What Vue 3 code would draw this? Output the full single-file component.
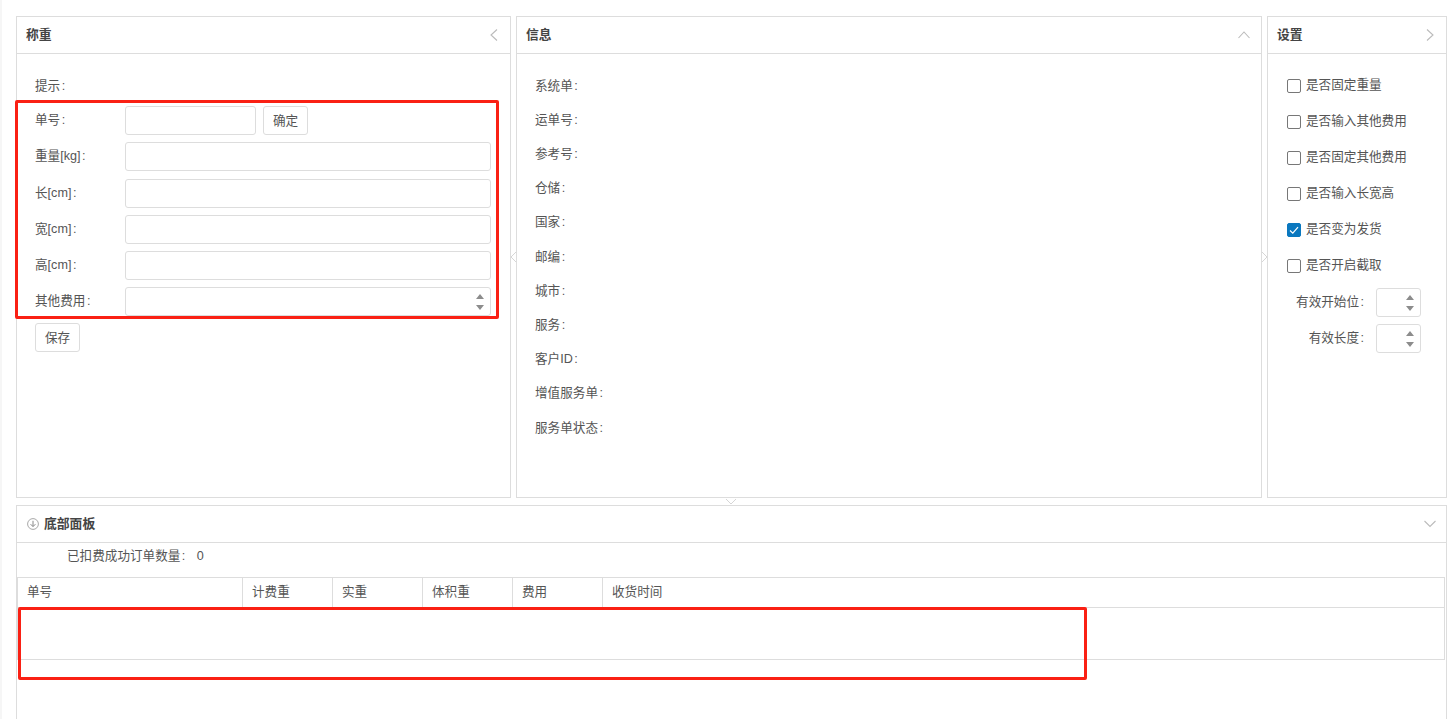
<script setup>
const infoRows = ['系统单', '运单号', '参考号', '仓储', '国家', '邮编', '城市', '服务', '客户ID', '增值服务单', '服务单状态']
const formRows = ['重量[kg]', '长[cm]', '宽[cm]', '高[cm]']
const checks = [
  { label: '是否固定重量', on: false },
  { label: '是否输入其他费用', on: false },
  { label: '是否固定其他费用', on: false },
  { label: '是否输入长宽高', on: false },
  { label: '是否变为发货', on: true },
  { label: '是否开启截取', on: false }
]
const numberRows = ['有效开始位', '有效长度']
const columns = [
  { label: '单号', wide: true },
  { label: '计费重' },
  { label: '实重' },
  { label: '体积重' },
  { label: '费用' },
  { label: '收货时间' }
]
</script>

<template>
  <div class="page">
    <div class="top">
      <section class="panel weigh">
        <header class="head">
          <h2>称重</h2>
          <svg class="chev" width="10" height="14" viewBox="0 0 10 14"><path d="M8 1.5 2 7l6 5.5" /></svg>
        </header>
        <div class="form">
          <div class="tip">提示<span class="c">:</span></div>
          <div class="row">
            <label>单号<span class="c">:</span></label>
            <input class="field short" type="text" />
            <button class="btn" type="button">确定</button>
          </div>
          <div v-for="r in formRows" :key="r" class="row">
            <label>{{ r }}<span class="c">:</span></label>
            <input class="field grow" type="text" />
          </div>
          <div class="row">
            <label>其他费用<span class="c">:</span></label>
            <div class="spin-wrap grow">
              <input class="field fill" type="text" />
              <svg class="spin" width="10" height="17" viewBox="0 0 10 17"><path d="M5 0 9 5H1zM1 11h8l-4 5z" /></svg>
            </div>
          </div>
          <button class="btn save" type="button">保存</button>
        </div>
      </section>

      <div class="split">
        <svg class="grip" width="7" height="12" viewBox="0 0 7 12"><path d="M6 1 1 6l5 5" /></svg>
      </div>

      <section class="panel info">
        <header class="head">
          <h2>信息</h2>
          <svg class="chev" width="14" height="10" viewBox="0 0 14 10"><path d="M1.5 8 7 2l5.5 6" /></svg>
        </header>
        <div class="info-list">
          <div v-for="r in infoRows" :key="r" class="info-row">{{ r }}<span class="c">:</span></div>
        </div>
      </section>

      <div class="split">
        <svg class="grip" width="7" height="12" viewBox="0 0 7 12"><path d="m1 1 5 5-5 5" /></svg>
      </div>

      <section class="panel settings">
        <header class="head">
          <h2>设置</h2>
          <svg class="chev" width="10" height="14" viewBox="0 0 10 14"><path d="m2 1.5 6 5.5-6 5.5" /></svg>
        </header>
        <div class="check-list">
          <div v-for="c in checks" :key="c.label" class="check-row">
            <span class="box" :class="{ on: c.on }">
              <svg v-if="c.on" width="12" height="12" viewBox="0 0 12 12"><path d="m2 6.5 2.8 2.7L10 3.2" /></svg>
            </span>
            <span class="check-text">{{ c.label }}</span>
          </div>
          <div class="num-list">
            <div v-for="n in numberRows" :key="n" class="num-row">
              <label>{{ n }}<span class="c">:</span></label>
              <div class="spin-wrap num">
                <input class="field fill" type="text" />
                <svg class="spin" width="10" height="17" viewBox="0 0 10 17"><path d="M5 0 9 5H1zM1 11h8l-4 5z" /></svg>
              </div>
            </div>
          </div>
        </div>
      </section>
    </div>

    <div class="hsplit">
      <svg class="grip" width="12" height="7" viewBox="0 0 12 7"><path d="m1 1 5 5 5-5" /></svg>
    </div>

    <section class="panel bottom">
      <header class="head">
        <h2 class="with-icon">
          <svg width="12" height="12" viewBox="0 0 12 12" class="circle"><circle cx="6" cy="6" r="5.4" /><path class="arrow" d="M6 2.8v5.6M3.6 6.2 6 8.6l2.4-2.4" /></svg>
          底部面板
        </h2>
        <svg class="chev" width="14" height="10" viewBox="0 0 14 10"><path d="M1.5 2 7 7.5 12.5 2" /></svg>
      </header>
      <div class="count"><span>已扣费成功订单数量<span class="c">:</span></span><span class="zero">0</span></div>
      <div class="table">
        <div class="thead">
          <div v-for="c in columns" :key="c.label" class="th" :class="{ wide: c.wide }">{{ c.label }}</div>
        </div>
        <div class="tbody"></div>
      </div>
    </section>

    <div class="mark mark-form"></div>
    <div class="mark mark-table"></div>
  </div>
</template>

<style scoped>
.page {
  position: relative;
  box-sizing: border-box;
  width: 1451px;
  height: 719px;
  overflow: hidden;
  padding: 16px 4px 0 16px;
  background: #fff;
  color: #555;
  font: 12.6px/20px "Liberation Sans", "Noto Sans CJK SC", sans-serif;
}
.page::before {
  content: "";
  position: absolute;
  left: 0;
  top: 0;
  bottom: 0;
  width: 2px;
  background: #f6f6f6;
}
.c { margin-left: 1.5px; }
.top {
  display: flex;
  height: 482px;
}
.panel {
  box-sizing: border-box;
  border: 1px solid #ddd;
  background: #fff;
}
.weigh { width: 495px; }
.info { width: 746px; }
.settings { width: 180px; }
.split {
  width: 5px;
  display: flex;
  align-items: center;
  justify-content: center;
}
.hsplit {
  height: 7px;
  display: flex;
  align-items: center;
  justify-content: center;
  margin-left: -1px;
}
.grip {
  flex: none;
  fill: none;
  stroke: #d6d6d6;
  stroke-width: 1;
}
.head {
  box-sizing: border-box;
  height: 37px;
  border-bottom: 1px solid #ddd;
  display: flex;
  align-items: center;
  justify-content: space-between;
  padding: 0 9px;
}
.weigh .head,
.settings .head { padding-right: 11px; }
.info .head { padding-right: 10px; }
.head h2 {
  margin: 0;
  font-size: 12.8px;
  font-weight: 700;
  color: #444;
}
.with-icon {
  display: flex;
  align-items: center;
  gap: 5px;
  margin-left: 1px !important;
}
.circle {
  fill: none;
  stroke: #a8a8a8;
  stroke-width: 1;
}
.arrow { stroke: #888; }
.chev {
  fill: none;
  stroke: #bbb;
  stroke-width: 1.1;
}
.form {
  padding: 21.6px 19px 0 18px;
}
.tip {
  height: 30.6px;
  line-height: 20px;
}
.row {
  display: flex;
  align-items: center;
  height: 29px;
  margin-bottom: 7.2px;
}
.row label {
  width: 90px;
  flex: none;
  margin-bottom: 1px;
}
.field {
  box-sizing: border-box;
  height: 29px;
  border: 1px solid #ddd;
  border-radius: 3px;
  background: #fff;
  padding: 0 8px;
  outline: none;
  min-width: 0;
}
.short { width: 131px; }
.grow { flex: 1; min-width: 0; }
.fill { width: 100%; display: block; }
.btn {
  box-sizing: border-box;
  height: 29px;
  width: 45px;
  padding: 0;
  margin-left: 7px;
  border: 1px solid #ddd;
  border-radius: 3px;
  background: #fff;
  color: #555;
  font: inherit;
}
.save {
  display: block;
  margin: 0;
}
.spin-wrap { position: relative; }
.spin {
  position: absolute;
  right: 6px;
  top: 7px;
  fill: #8c8c8c;
}
.info-list {
  padding: 21.7px 18px 0;
}
.info-row {
  height: 34.2px;
  line-height: 20px;
}
.check-list {
  padding: 14px 0 0 19px;
}
.check-row {
  display: flex;
  align-items: center;
  gap: 5px;
  height: 36px;
}
.check-text { margin-bottom: 2px; }
.box {
  box-sizing: border-box;
  width: 14px;
  height: 14px;
  border: 1px solid #777;
  border-radius: 2px;
  display: flex;
  align-items: center;
  justify-content: center;
}
.box.on {
  background: #0a78bf;
  border-color: #0a78bf;
}
.box svg {
  fill: none;
  stroke: #fff;
  stroke-width: 1.2;
}
.num-list {
  margin: 4px 0 0 -19px;
}
.num-row {
  display: flex;
  align-items: center;
  height: 29px;
  margin-bottom: 7px;
}
.num-row label {
  width: 96px;
  text-align: right;
  margin-right: 12px;
  margin-bottom: 2px;
}
.num { width: 45px; }
.bottom {
  height: 230px;
}
.count {
  height: 34px;
  padding-left: 50px;
  line-height: 26px;
  display: flex;
}
.zero { margin-left: 11.5px; }
.table {
  box-sizing: border-box;
  width: 1428px;
  border: 1px solid #ddd;
}
.thead {
  display: flex;
  height: 29px;
  border-bottom: 1px solid #ddd;
}
.th {
  box-sizing: border-box;
  width: 90px;
  padding-left: 9px;
  border-right: 1px solid #ddd;
  line-height: 28px;
}
.th.wide { width: 225px; }
.th:last-child {
  flex: 1;
  border-right: 0;
}
.tbody { height: 51px; }
.mark {
  position: absolute;
  box-sizing: border-box;
  border: 3px solid #fa2014;
  border-radius: 2px;
  pointer-events: none;
}
.mark-form {
  left: 15px;
  top: 100px;
  width: 484px;
  height: 219px;
}
.mark-table {
  left: 18px;
  top: 607px;
  width: 1069px;
  height: 73px;
}
</style>
